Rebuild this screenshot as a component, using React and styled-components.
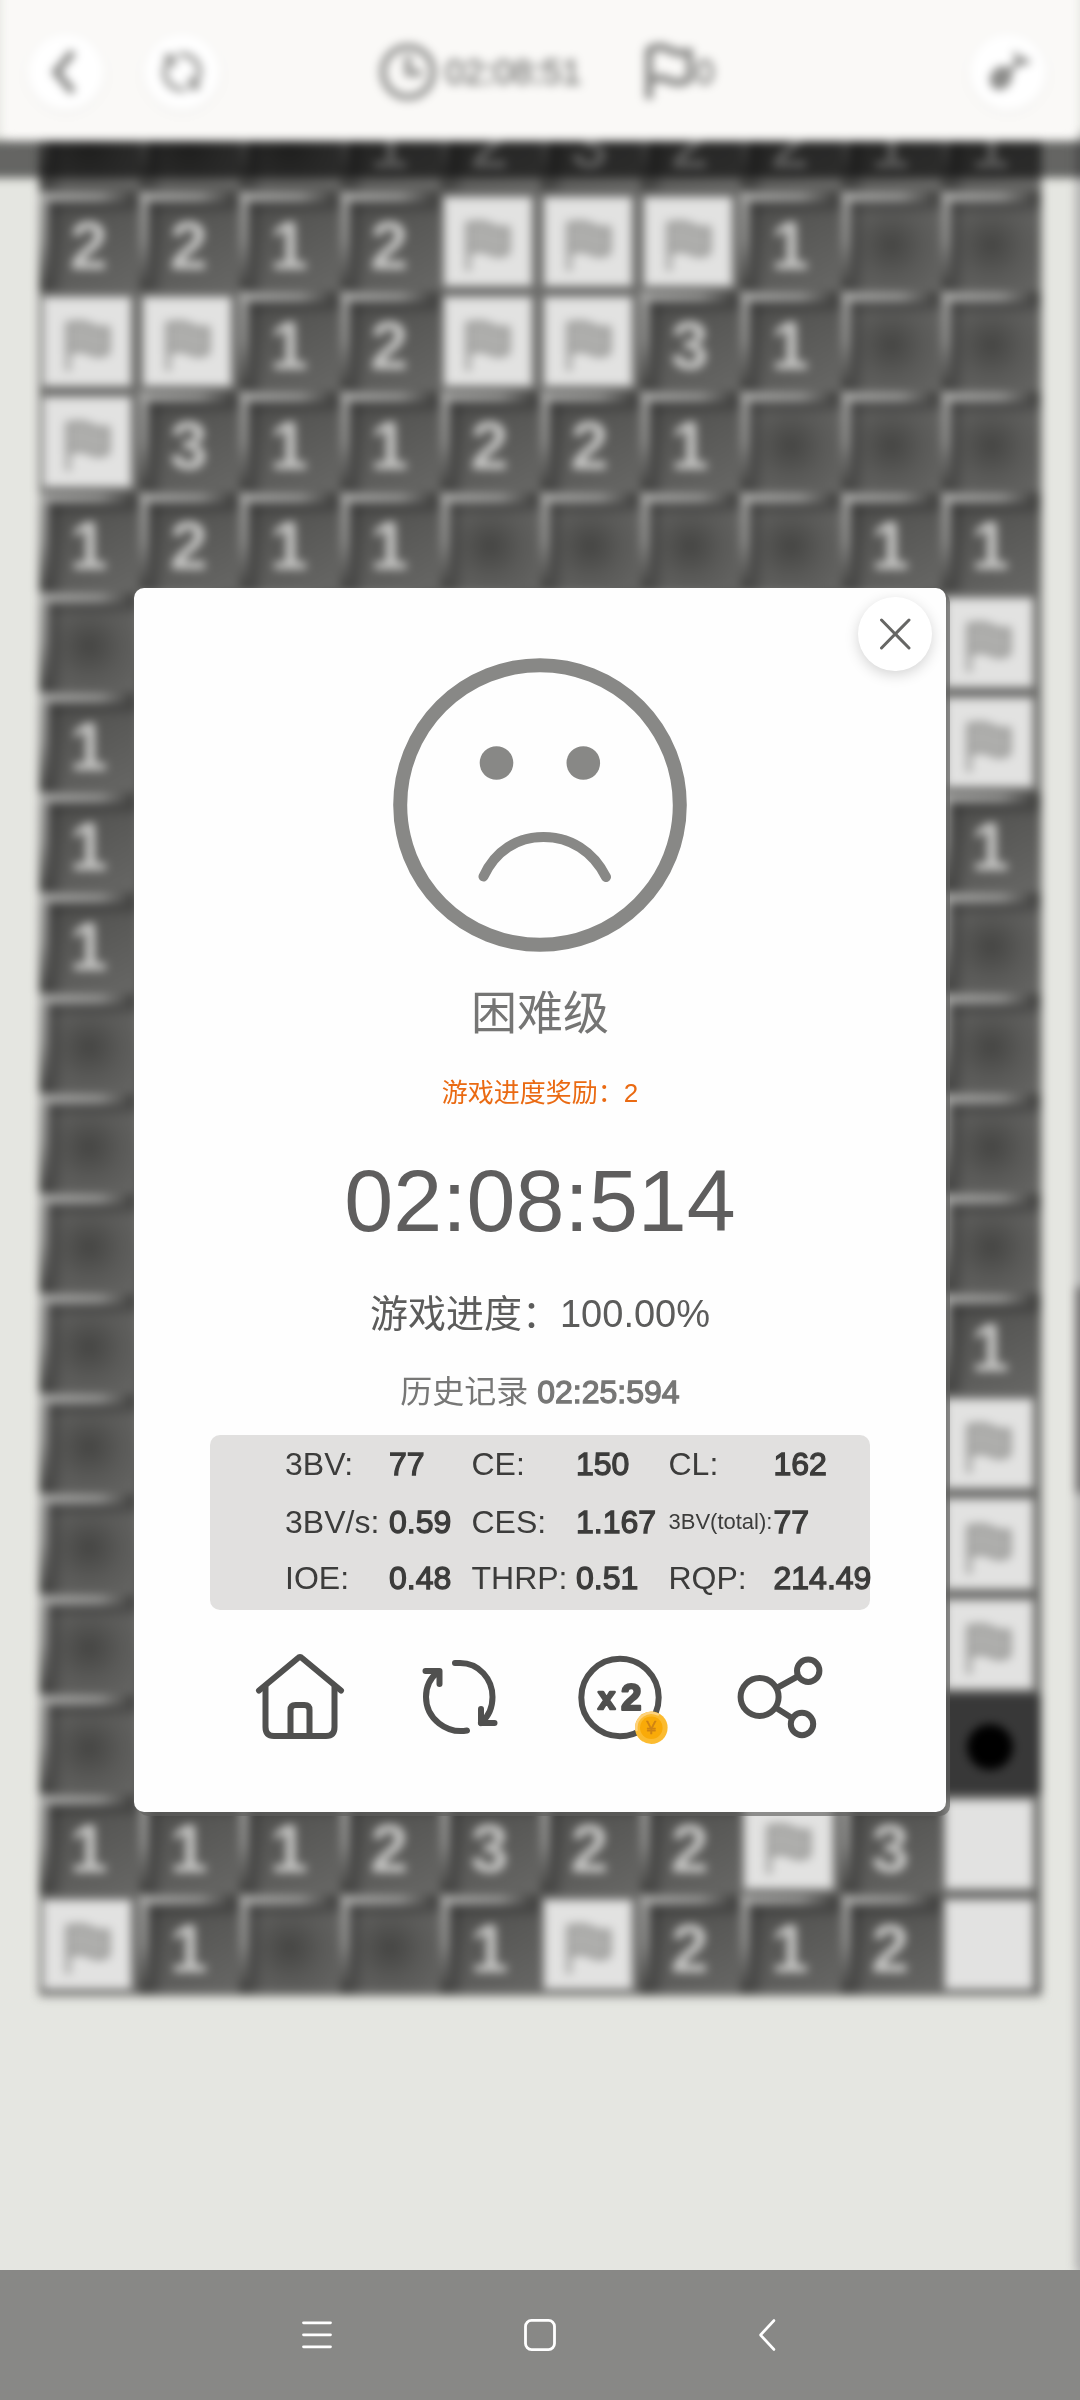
import React from "react";
import styled, { createGlobalStyle, css } from "styled-components";

const GlobalStyle = createGlobalStyle`
  *, *::before, *::after { box-sizing: border-box; }
  body { margin: 0; background: #e5e6e1; }
`;

const Screen = styled.div`
  position: relative;
  display: flex;
  flex-direction: column;
  width: 1080px;
  height: 2400px;
  overflow: hidden;
  background: #e5e6e1;
  font-family: "Liberation Sans", "Noto Sans CJK SC", sans-serif;
`;

const Game = styled.div`
  flex: 1;
  min-height: 0;
  display: flex;
  flex-direction: column;
  filter: blur(4.6px);
`;

const Header = styled.header`
  position: relative;
  z-index: 1;
  flex: none;
  display: flex;
  align-items: center;
  height: 141px;
  margin: 0 1px;
  padding: 3px 33px 0 27px;
  border-radius: 0 0 10px 10px;
  background: #faf9f7;
  box-shadow: 0 -20px 0 #faf9f7;
`;

const RoundButton = styled.div`
  display: flex;
  align-items: center;
  justify-content: center;
  width: 76px;
  height: 76px;
  border-radius: 50%;
  background: #ffffff;
  box-shadow: 0 2px 10px rgba(0, 0, 0, 0.06);
`;

const LeftTools = styled.div`
  display: flex;
  gap: 40px;
  width: 351px;
`;

const Counters = styled.div`
  flex: 1;
  display: flex;
  align-items: center;
  color: #8c8c8a;
  font-size: 35px;
  line-height: 40px;
`;

const Counter = styled.div`
  display: flex;
  align-items: center;
  gap: ${(p) => p.$gap}px;
  width: ${(p) => p.$width}px;
`;

const Field = styled.div`
  flex: 1;
  min-height: 0;
  display: flex;
  justify-content: space-between;
`;

const BoardArea = styled.div`
  width: 1002px;
  margin-left: 39px;
  margin-top: -50.2px;
`;

const BandShade = styled.div`
  position: absolute;
  left: -20px;
  top: 141px;
  width: 1120px;
  height: 37px;
  background: rgba(0, 0, 0, 0.56);
`;

const Board = styled.div`
  display: grid;
  grid-template-columns: repeat(10, 100.2px);
  grid-auto-rows: 100.2px;
  box-shadow: 1px 3px 0 rgba(90, 90, 88, 0.5);
`;

const opened = css`
  background:
    linear-gradient(90deg, #a4a4a2 0%, #90908e 60%, #454543 92%) 0 1px / 100% 10px no-repeat,
    linear-gradient(180deg, #989896 0%, #868684 50%, #444442 95%) 0 0 / 10px 100% no-repeat,
    linear-gradient(180deg, rgba(40, 40, 40, 0.5), transparent) 0 11px / 100% 14px no-repeat,
    linear-gradient(90deg, rgba(40, 40, 40, 0.5), transparent) 10px 0 / 16px 100% no-repeat,
    ${(p) =>
      p.children
        ? "linear-gradient(150deg, #50504e 20%, #666664 95%)"
        : "radial-gradient(circle at 50% 54%, #454543 0%, #5a5a58 44%, #666664 90%)"};
`;

const raised = css`
  background: #e2e2e1;
  border-style: solid;
  border-color: #6c6c6a;
  border-width: 6px 8px 5px 4px;
`;

const mine = css`
  background: #383838;
`;

const Cell = styled.div`
  display: flex;
  align-items: center;
  justify-content: center;
  padding: 7px 1px 0 0;
  color: #c9c9c7;
  font-size: 68px;
  font-weight: 700;
  line-height: 1;
  ${(p) => (p.$kind === "raised" ? raised : p.$kind === "mine" ? mine : opened)}
`;

const Mine = styled.span`
  width: 46px;
  height: 46px;
  border-radius: 50%;
  background: #000;
`;

const Track = styled.div`
  flex: none;
  width: 5px;
  padding-top: 1146px;
  background: #b4b4b3;
  box-shadow: 14px 0 0 10px #b4b4b3;
`;

const Thumb = styled.div`
  height: 206px;
  background: #767475;
  box-shadow: 5px 0 0 #767475, 10px 0 0 #767475, 15px 0 0 #767475;
`;

const NavBar = styled.nav`
  position: relative;
  flex: none;
  display: flex;
  align-items: center;
  justify-content: center;
  gap: 184px;
  height: 130px;
  background: #888886;
`;

const Dialog = styled.section`
  position: absolute;
  left: 134px;
  top: 588px;
  width: 812px;
  height: 1224px;
  display: flex;
  flex-direction: column;
  align-items: center;
  padding-top: 70px;
  border-radius: 10px;
  background: #fefefe;
  box-shadow: 4px 4px 0 rgba(96, 96, 94, 0.65);
`;

const CloseButton = styled.div`
  position: absolute;
  right: 14px;
  top: 9px;
  display: flex;
  align-items: center;
  justify-content: center;
  width: 74px;
  height: 74px;
  border-radius: 50%;
  background: #ffffff;
  box-shadow: 0 4px 14px rgba(0, 0, 0, 0.17);
`;

const Line = styled.div`
  flex: none;
  height: ${(p) => p.$height}px;
  margin-top: ${(p) => p.$gap}px;
  color: ${(p) => p.$color};
  font-size: ${(p) => p.$size}px;
  line-height: ${(p) => p.$height}px;
  white-space: pre;
`;

const Heavy = styled.span`
  -webkit-text-stroke: 1.3px currentColor;
`;

const Stats = styled.div`
  flex: none;
  display: grid;
  grid-template-columns: 104px 82.5px 104.5px 92.5px 105px auto;
  grid-template-rows: 57.5px 57px 56px;
  align-items: center;
  width: 660px;
  height: 175px;
  margin-top: 23px;
  padding: 1px 0 0 75px;
  border-radius: 10px;
  background: #e1e0df;
  color: #3c3c3b;
  font-size: 32px;
  line-height: 56px;
  white-space: nowrap;
`;

const StatLabel = styled.span`
  font-size: ${(p) => (p.$small ? 22 : 32)}px;
`;

const Actions = styled.div`
  display: flex;
  gap: 60px;
  margin-top: 37px;
`;

const ActionSvg = styled.svg`
  width: 100px;
  height: 100px;
  fill: none;
  stroke: #50504f;
  stroke-width: 6;
  stroke-linecap: round;
  stroke-linejoin: round;
`;

const Glyph = styled.text`
  fill: ${(p) => p.$color};
  stroke: ${(p) => p.$color};
  stroke-width: ${(p) => p.$stroke}px;
  font-size: ${(p) => p.$size}px;
  font-weight: ${(p) => p.$weight || 700};
  text-anchor: middle;
`;

const ROWS = [
  "...1232211",
  "2212FFF1..",
  "FF12FF31..",
  "F311221...",
  "1211....11",
  ".........F",
  "1........F",
  "1........1",
  "1.........",
  "..........",
  "..........",
  "..........",
  ".........1",
  ".........F",
  ".........F",
  ".........F",
  ".........*",
  "1112322F3U",
  "F1..1F212U",
];

const STATS = [
  ["3BV:", "77"], ["CE:", "150"], ["CL:", "162"],
  ["3BV/s:", "0.59"], ["CES:", "1.167"], ["3BV(total):", "77"],
  ["IOE:", "0.48"], ["THRP:", "0.51"], ["RQP:", "214.49"],
];

function BoardFlag() {
  return (
    <svg width="50" height="56" viewBox="0 0 50 56" fill="#aeaeac" stroke="#a0a09e" strokeWidth="5" strokeLinejoin="round" strokeLinecap="round">
      <path d="M6 6V52" />
      <path d="M6 8C16 3 24 6 30 9C36 12 40 12 46 11V35C38 41 30 37 24 34C18 32 12 33 6 36Z" />
    </svg>
  );
}

function BoardCell({ value }) {
  if (value === "F") {
    return <Cell $kind="raised"><BoardFlag /></Cell>;
  }
  if (value === "U") return <Cell $kind="raised" />;
  if (value === "*") return <Cell $kind="mine"><Mine /></Cell>;
  return <Cell>{value === "." ? null : value}</Cell>;
}

function GameHeader() {
  return (
    <Header>
      <LeftTools>
        <RoundButton>
          <svg width="40" height="50" viewBox="0 0 40 50" fill="none" stroke="#868684" strokeWidth="7.5">
            <path d="M27 5L10 25L27 45" />
          </svg>
        </RoundButton>
        <RoundButton>
          <svg width="50" height="50" viewBox="0 0 50 50" fill="none" stroke="#9c9c9a" strokeWidth="5.5">
            <path d="M22 8A17 17 0 0 1 37 37M28 42A17 17 0 0 1 13 13" />
            <path d="M7 10H16V20M43 40H34V30" />
          </svg>
        </RoundButton>
      </LeftTools>
      <Counters>
        <Counter $width={262} $gap={6}>
          <svg width="60" height="60" viewBox="0 0 60 60" fill="none" stroke="#969694" strokeWidth="7">
            <circle cx="29" cy="30" r="25" />
            <path d="M29 14V31H43" />
          </svg>
          <Heavy>02:08:51</Heavy>
        </Counter>
        <Counter $width={80} $gap={2}>
          <svg width="52" height="60" viewBox="0 0 52 60" fill="none" stroke="#8c8c8a" strokeWidth="8" strokeLinejoin="round">
            <path d="M8 57V8C18 2 24 6 31 9C37 12 42 11 49 10V37C38 44 30 39 24 37C18 35 12 37 8 40" />
          </svg>
          <Heavy>0</Heavy>
        </Counter>
      </Counters>
      <RoundButton>
        <svg width="60" height="60" viewBox="0 0 60 60" stroke="#8c8c8a">
          <ellipse cx="23" cy="36" rx="10" ry="12" transform="rotate(35 23 36)" fill="#8c8c8a" strokeWidth="1" />
          <path d="M24 36L46 15" strokeWidth="5" />
          <path d="M37 10L40 22L52 19" strokeWidth="4" fill="none" />
        </svg>
      </RoundButton>
    </Header>
  );
}

function ResultDialog() {
  return (
    <Dialog>
      <CloseButton>
        <svg width="34" height="34" viewBox="0 0 34 34" stroke="#666664" strokeWidth="3" strokeLinecap="round">
          <path d="M3.5 3L31 31M31 3L3.5 31" />
        </svg>
      </CloseButton>
      <svg width="294" height="294" viewBox="0 0 294 294" fill="none" stroke="#888886">
        <circle cx="147" cy="147" r="139.8" strokeWidth="14" />
        <circle cx="103.5" cy="105" r="16.8" fill="#888886" stroke="none" />
        <circle cx="190.3" cy="105" r="16.8" fill="#888886" stroke="none" />
        <path d="M90.5 218.5C102 193 124 179 150.5 179C177 179 200 193 213 219" strokeWidth="10" strokeLinecap="round" />
      </svg>
      <Line $gap={30.5} $height={60} $size={46} $color="#757574">困难级</Line>
      <Line $gap={30} $height={40} $size={26} $color="#ea6a12">游戏进度奖励：2</Line>
      <Line $gap={38} $height={100} $size={88} $color="#5f5e5e">02:08:514</Line>
      <Line $gap={38} $height={50} $size={38} $color="#5c5c5b">游戏进度：100.00%</Line>
      <Line $gap={33} $height={40} $size={32} $color="#777776">历史记录 <Heavy>02:25:594</Heavy></Line>
      <Stats>
        {STATS.map(([label, value]) => (
          <React.Fragment key={label}>
            <StatLabel $small={label.length > 8}>{label}</StatLabel>
            <Heavy>{value}</Heavy>
          </React.Fragment>
        ))}
      </Stats>
      <Actions>
        <ActionSvg viewBox="0 0 100 100">
          <path d="M9 43.5L47.5 11.5Q50 9 52.5 11.5L91 43.5" />
          <path d="M15.5 40V80Q15.5 89 24 89H76Q84.5 89 84.5 80V40" />
          <path d="M40.5 88V63Q40.5 58 45.5 58H54.5Q59.5 58 59.5 63V88" />
        </ActionSvg>
        <ActionSvg viewBox="0 0 100 100">
          <path d="M45 16H50C69 16 82.5 32 82.5 50C82.5 61 78 70 71 76" />
          <path d="M71 62V76H84.5" />
          <path d="M57 83.5C37 87 16 72 16 50C16 38 20 31 28 25" />
          <path d="M15.5 24H29.5V37" />
        </ActionSvg>
        <ActionSvg viewBox="0 0 100 100">
          <circle cx="50" cy="50.5" r="38.7" />
          <Glyph x="36.7" y="62" $size={31} $color="#50504f" $stroke={2.4}>x</Glyph>
          <Glyph x="61.3" y="62.5" $size={37} $color="#50504f" $stroke={2.2}>2</Glyph>
          <circle cx="81.3" cy="80.7" r="16.3" fill="#fbbb30" stroke="none" />
          <path d="M66.5 83A15 15 0 0 1 88 67.5" stroke="#fdd27e" strokeWidth="2.5" />
          <circle cx="81.3" cy="80.7" r="11.3" fill="#f9aa08" stroke="none" />
          <Glyph x="81.3" y="87" $size={18} $weight={400} $color="#cf8314" $stroke={0.4}>¥</Glyph>
        </ActionSvg>
        <ActionSvg viewBox="0 0 100 100">
          <circle cx="29.6" cy="50" r="19" />
          <circle cx="78.2" cy="23.7" r="11.2" />
          <circle cx="72" cy="77" r="11.2" />
          <path d="M48.5 40L67.5 29.5M47 61.5L62 71" />
        </ActionSvg>
      </Actions>
    </Dialog>
  );
}

export default function App() {
  return (
    <Screen>
      <GlobalStyle />
      <Game>
        <GameHeader />
        <Field>
          <BoardArea>
            <Board>
              {ROWS.flatMap((row, r) =>
                [...row].map((value, c) => <BoardCell key={`${r}-${c}`} value={value} />)
              )}
            </Board>
          </BoardArea>
          <Track><Thumb /></Track>
        </Field>
        <BandShade />
      </Game>
      <NavBar>
        <svg width="40" height="40" viewBox="0 0 40 40" stroke="#fff" strokeWidth="2.8" strokeLinecap="round">
          <path d="M7.5 7.8H34.5M7.5 19.8H34.5M7.5 31.8H34.5" />
        </svg>
        <svg width="40" height="40" viewBox="0 0 40 40" fill="none" stroke="#fff" strokeWidth="2.8">
          <rect x="5.5" y="5.4" width="29" height="29.2" rx="6" />
        </svg>
        <svg width="40" height="40" viewBox="0 0 40 40" fill="none" stroke="#fff" strokeWidth="2.6" strokeLinecap="round" strokeLinejoin="round">
          <path d="M30 5.5L16.5 20L30 34.5" />
        </svg>
      </NavBar>
      <ResultDialog />
    </Screen>
  );
}
